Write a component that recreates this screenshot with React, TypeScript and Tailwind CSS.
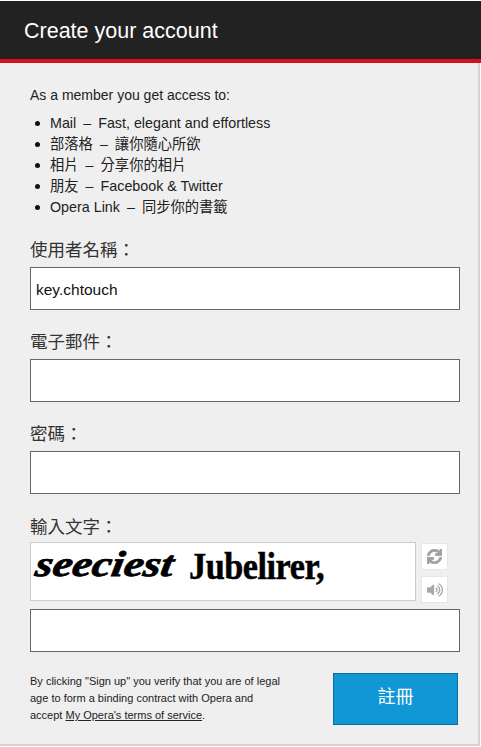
import React from "react";
import { FaSync, FaVolumeUp } from "react-icons/fa";

const cjk = "font-['Liberation_Sans','Noto_Sans_CJK_TC',sans-serif]";

function Field({ label, value, className }: { label: string; value?: string; className?: string }) {
  return (
    <div className={className}>
      <div className="h-[28px] text-[17.5px] leading-[28px] text-[#333]">{label}</div>
      <div className="mt-[3px] flex h-[43px] w-[430px] items-center border border-[#666] bg-white pl-[5px] pt-[3px] text-[15.5px] text-[#111]">
        {value}
      </div>
    </div>
  );
}

const items: [string, string][] = [
  ["Mail", "Fast, elegant and effortless"],
  ["部落格", "讓你隨心所欲"],
  ["相片", "分享你的相片"],
  ["朋友", "Facebook & Twitter"],
  ["Opera Link", "同步你的書籤"],
];

export default function App() {
  return (
    <div className={`${cjk} h-[747px] w-[481px] overflow-hidden bg-white`}>
      <div className="h-[745px] w-[480px] border-r-2 border-b-2 border-[#d4d4d4] bg-[#efefef]">
        <div className="-mr-[3px] mt-px flex h-[58px] items-center bg-[#222] pl-[24px] pt-[3px] text-[21.5px] text-white">
          Create your account
        </div>
        <div className="-mr-[3px] h-[4px] bg-[#d4101c]" />
        <div className="pl-[30px] pt-[22px]">
          <p className="text-[14px] leading-[20px] text-[#222]">As a member you get access to:</p>
          <ul className="mt-[8px] text-[14.3px] leading-[21px] text-[#222]">
            {items.map(([a, b]) => (
              <li key={a} className="flex items-center">
                <span className="ml-[5px] mr-[10px] h-[5px] w-[5px] rounded-full bg-[#111]" />
                <span>{a}</span>
                <span className="mx-[7px]">–</span>
                <span>{b}</span>
              </li>
            ))}
          </ul>
          <Field label="使用者名稱：" value="key.chtouch" className="mt-[18px]" />
          <Field label="電子郵件：" className="mt-[18px]" />
          <Field label="密碼：" className="mt-[18px]" />
          <div className="mt-[19px] h-[28px] text-[17.5px] leading-[28px] text-[#333]">輸入文字：</div>
          <div className="mt-px flex">
            <div className="flex h-[59px] w-[386px] items-center border border-[#ccc] bg-white pl-[5px] pb-[12px] text-black">
              <span className="mb-[4px] inline-block w-[153px] origin-left font-['Liberation_Serif',serif] text-[36px] font-bold italic leading-none [transform:scaleX(1.23)_skewX(-8deg)] [-webkit-text-stroke:0.8px_black]">
                seeciest
              </span>
              <span className="inline-block origin-left font-['Liberation_Serif',serif] text-[38px] font-bold leading-none tracking-[-0.5px] [transform:scaleX(0.9)] [-webkit-text-stroke:0.5px_black]">
                Jubelirer,
              </span>
            </div>
            <div className="ml-[5px] flex flex-col gap-[6px] pt-px">
              <div className="flex h-[27px] w-[27px] items-center justify-center border border-[#e6e6e6] bg-white">
                <FaSync size={15} className="text-[#a0a0a0] [stroke-width:30px] [stroke:#a0a0a0]" />
              </div>
              <div className="flex h-[27px] w-[27px] items-center justify-center border border-[#e6e6e6] bg-white">
                <FaVolumeUp size={16} className="text-[#a8a8a8]" />
              </div>
            </div>
          </div>
          <div className="mt-[6px] h-[43px] w-[430px] border border-[#666] bg-white" />
          <div className="mt-[21px] flex w-[428px] items-start justify-between">
            <p className="text-[11px] leading-[17px] text-[#222]">
              By clicking "Sign up" you verify that you are of legal
              <br />
              age to form a binding contract with Opera and
              <br />
              accept <span className="underline">My Opera's terms of service</span>.
            </p>
            <button className="flex h-[52px] w-[125px] items-center justify-center border border-[#0e6f9f] bg-[#1196d6] pb-[3px] text-[18px] text-white">
              註冊
            </button>
          </div>
        </div>
      </div>
    </div>
  );
}
